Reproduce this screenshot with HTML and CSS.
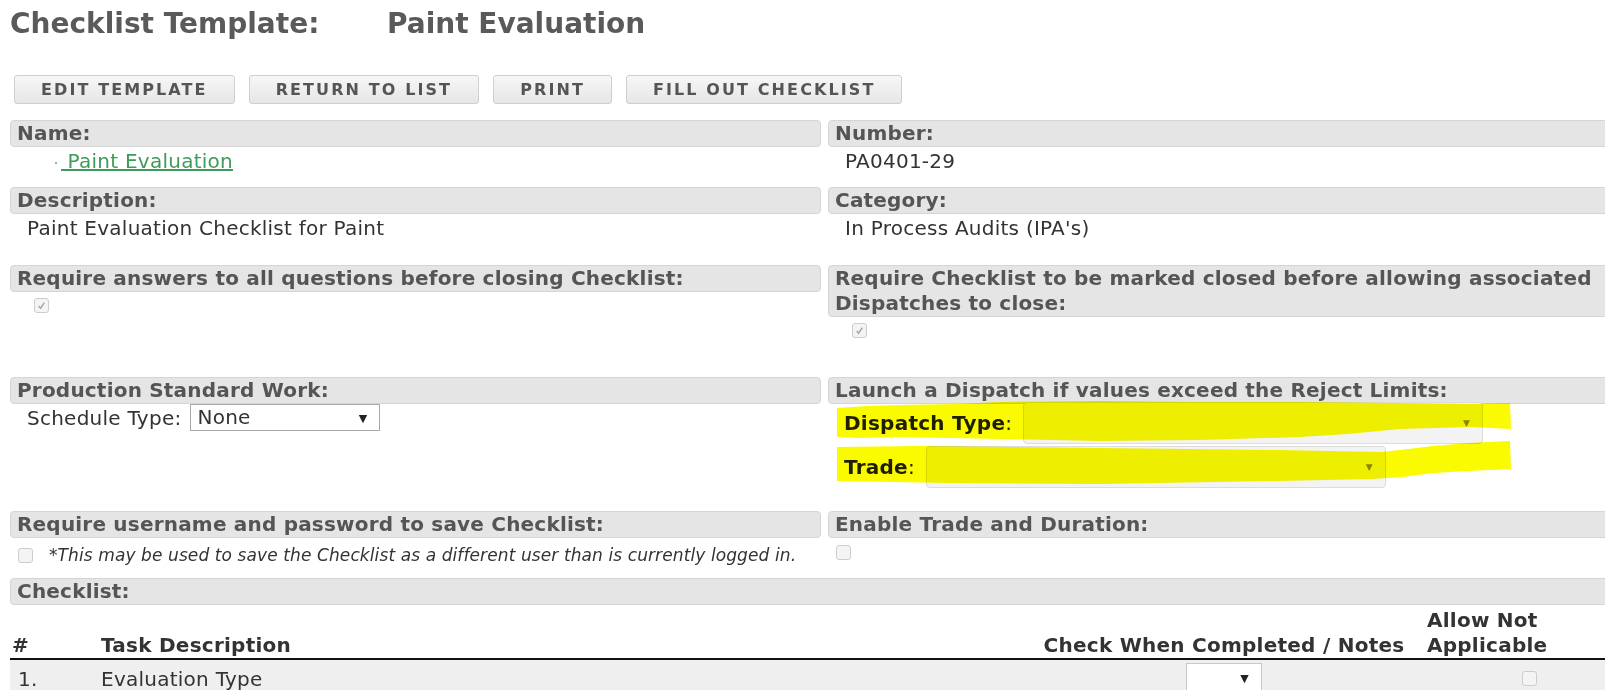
FILE: index.html
```html
<!DOCTYPE html>
<html lang="en">
<head>
    <meta charset="UTF-8">
    <meta name="viewport" content="width=device-width, initial-scale=1.0">
    <title>Checklist Template: Paint Evaluation</title>
    <link rel="stylesheet" href="styles.css">
</head>
<body>
    <div class="page">
        <h1 class="page-title"><span class="title-label">Checklist Template:</span>Paint Evaluation</h1>

        <div class="toolbar">
            <button type="button" class="tool-btn">Edit Template</button>
            <button type="button" class="tool-btn">Return to List</button>
            <button type="button" class="tool-btn">Print</button>
            <button type="button" class="tool-btn">Fill Out Checklist</button>
        </div>

        <div class="fields">
            <div class="field">
                <div class="field-head">Name:</div>
                <div class="field-value name-value"><span class="icon-dot"></span><a href="#" class="name-link">&nbsp;Paint Evaluation</a></div>
            </div>
            <div class="field">
                <div class="field-head">Number:</div>
                <div class="field-value">PA0401-29</div>
            </div>

            <div class="field">
                <div class="field-head">Description:</div>
                <div class="field-value">Paint Evaluation Checklist for Paint</div>
            </div>
            <div class="field">
                <div class="field-head">Category:</div>
                <div class="field-value">In Process Audits (IPA's)</div>
            </div>

            <div class="field">
                <div class="field-head">Require answers to all questions before closing Checklist:</div>
                <div class="field-check">
                    <span class="chk checked"><svg viewBox="0 0 14 14"><path d="M4 7.5l2 2.5 4-6" /></svg></span>
                </div>
            </div>
            <div class="field">
                <div class="field-head">Require Checklist to be marked closed before allowing associated Dispatches to close:</div>
                <div class="field-check">
                    <span class="chk checked"><svg viewBox="0 0 14 14"><path d="M4 7.5l2 2.5 4-6" /></svg></span>
                </div>
            </div>

            <div class="field">
                <div class="field-head">Production Standard Work:</div>
                <div class="schedule">
                    <span>Schedule Type:</span>
                    <div class="select schedule-select">None<span class="arrow">&#9660;</span></div>
                </div>
            </div>
            <div class="field dispatch">
                <div class="field-head">Launch a Dispatch if values exceed the Reject Limits:</div>
                <div class="dispatch-row dispatch-type">
                    <span class="dispatch-label"><b>Dispatch Type</b>:</span>
                    <div class="select select-off"><span class="arrow">&#9660;</span></div>
                </div>
                <div class="dispatch-row">
                    <span class="dispatch-label"><b>Trade</b>:</span>
                    <div class="select select-off"><span class="arrow">&#9660;</span></div>
                </div>
                <svg class="marker" viewBox="0 0 811 134">
                    <path d="M9 31 L40 29 L72 28 L130 27 L172 25 L272 24 L372 25 L472 25 L572 26 L642 27 L682 26 L683 52 L642 50 L572 52 L520 57 L472 60 L372 63 L272 64 L172 62 L72 60 L30 61 L9 60 Z" />
                    <path d="M9 70 L90 69 L272 71 L450 73 L554 75 L580 72 L605 69 L640 66 L682 64 L683 92 L640 94 L605 96 L575 100 L544 102 L450 104 L272 107 L120 106 L9 104 Z" />
                </svg>
            </div>

            <div class="field">
                <div class="field-head">Require username and password to save Checklist:</div>
                <div class="field-check small-indent">
                    <span class="chk"></span>
                    <span class="note">*This may be used to save the Checklist as a different user than is currently logged in.</span>
                </div>
            </div>
            <div class="field">
                <div class="field-head">Enable Trade and Duration:</div>
                <div class="field-check small-indent">
                    <span class="chk"></span>
                </div>
            </div>
        </div>

        <div class="field-head wide">Checklist:</div>

        <table class="tasks">
            <colgroup>
                <col class="col-num">
                <col class="col-task">
                <col class="col-done">
                <col class="col-na">
            </colgroup>
            <thead>
                <tr>
                    <th>#</th>
                    <th>Task Description</th>
                    <th class="center">Check When Completed / Notes</th>
                    <th class="na-head"><span class="na-text">Allow Not Applicable</span></th>
                </tr>
            </thead>
            <tbody>
                <tr>
                    <td class="num">1.</td>
                    <td>Evaluation Type</td>
                    <td class="center"><div class="select row-select"><span class="arrow">&#9660;</span></div></td>
                    <td class="na-cell"><span class="chk"></span></td>
                </tr>
            </tbody>
        </table>
    </div>
</body>
</html>
```

FILE: styles.css
```css
html, body {
    overflow: hidden;
}
body {
    margin: 0;
    font-family: "DejaVu Sans", sans-serif;
    font-size: 20px;
    letter-spacing: 0.25px;
    color: #333;
    background: #fff;
}
.page {
    padding: 0 0 0 10px;
    width: 1629px;
}
.page-title {
    margin: 9px 0 36px 0;
    font-size: 28px;
    line-height: 30px;
    letter-spacing: 0;
    color: #5a5a5a;
}
.title-label {
    display: inline-block;
    width: 377px;
}
.toolbar {
    display: flex;
    gap: 14px;
    padding-left: 4px;
    margin-bottom: 16px;
}
.tool-btn {
    height: 29px;
    padding: 0 26px;
    font-family: "DejaVu Sans", sans-serif;
    font-size: 16px;
    font-weight: bold;
    letter-spacing: 2.1px;
    text-transform: uppercase;
    color: #555;
    background: linear-gradient(#f7f7f7, #e6e6e6);
    border: 1px solid #cfcfcf;
    border-radius: 3px;
}
.fields {
    display: grid;
    grid-template-columns: 811px 811px;
    grid-template-rows: 67px 78px 112px 134px 67px;
    column-gap: 7px;
    align-items: start;
}
.field {
    position: relative;
}
.field-head {
    background: #e5e5e5;
    border: 1px solid #d5d5d5;
    border-radius: 4px;
    padding: 0 6px;
    font-weight: bold;
    line-height: 25px;
    letter-spacing: 0.2px;
    color: #555;
}
.field-head.wide {
    width: 1617px;
}
.field-value {
    padding: 3px 17px 0 17px;
    line-height: 22px;
}
.name-value {
    padding-left: 45px;
}
.icon-dot {
    display: inline-block;
    width: 2px;
    height: 2px;
    background: #aaa;
    vertical-align: middle;
    margin-right: 4px;
}
.name-link {
    color: #3f9b5c;
}
.field-check {
    display: flex;
    align-items: center;
    gap: 16px;
    padding: 6px 0 0 24px;
}
.field-check.small-indent {
    padding-left: 8px;
    padding-top: 7px;
}
.chk {
    display: inline-block;
    box-sizing: border-box;
    width: 15px;
    height: 15px;
    border: 1px solid #cdcdcd;
    border-radius: 3px;
    background: #f4f4f4;
}
.chk svg {
    display: block;
    width: 13px;
    height: 13px;
}
.chk path {
    fill: none;
    stroke: #a8a8a8;
    stroke-width: 1.6;
}
.note {
    font-style: italic;
    font-size: 17px;
    letter-spacing: 0.1px;
    color: #333;
}
.schedule {
    display: flex;
    align-items: center;
    gap: 9px;
    padding-left: 17px;
}
.select {
    position: relative;
    box-sizing: border-box;
    background: #fff;
    border: 1px solid #a9a9a9;
}
.arrow {
    position: absolute;
    top: 50%;
    transform: translateY(-50%);
    font-size: 11px;
    color: #222;
}
.schedule-select {
    width: 190px;
    height: 27px;
    padding: 0 6px;
    line-height: 25px;
}
.schedule-select .arrow {
    right: 12px;
}
.dispatch-row {
    display: flex;
    align-items: center;
    gap: 11px;
    padding-left: 16px;
    margin-bottom: 2px;
}
.dispatch-label {
    color: #222;
}
.dispatch-label b {
    color: #1f1f1f;
}
.dispatch-type {
    margin-top: -2px;
}
.select-off {
    width: 460px;
    height: 42px;
    background: #f3f3f3;
    border: 1px solid #dcdcdc;
    border-radius: 4px;
}
.select-off .arrow {
    right: 12px;
    font-size: 9px;
    color: #8a8a8a;
}
.marker {
    position: absolute;
    left: 0;
    top: 0;
    width: 811px;
    height: 134px;
    mix-blend-mode: multiply;
    pointer-events: none;
}
.marker path {
    fill: #fafa00;
}
.tasks {
    width: 1629px;
    table-layout: fixed;
    border-collapse: collapse;
    margin-top: 3px;
}
.col-num {
    width: 89px;
}
.col-task {
    width: 930px;
}
.col-done {
    width: 390px;
}
.col-na {
    width: 220px;
}
.tasks th {
    padding: 0 2px;
    text-align: left;
    vertical-align: bottom;
    line-height: 25px;
    color: #333;
    border-bottom: 2px solid #111;
}
.tasks th.center,
.tasks td.center {
    text-align: center;
}
.tasks th.na-head {
    padding-left: 8px;
}
.na-text {
    display: block;
    width: 125px;
}
.tasks td {
    padding: 3px 2px;
    line-height: 28px;
    background: #efefef;
    vertical-align: middle;
}
.tasks td.num {
    padding-left: 8px;
}
.row-select {
    display: inline-block;
    vertical-align: top;
    width: 76px;
    height: 31px;
    border-color: #c8c8c8;
}
.row-select .arrow {
    right: 12px;
}
.tasks td.na-cell {
    padding-left: 103px;
}
```
